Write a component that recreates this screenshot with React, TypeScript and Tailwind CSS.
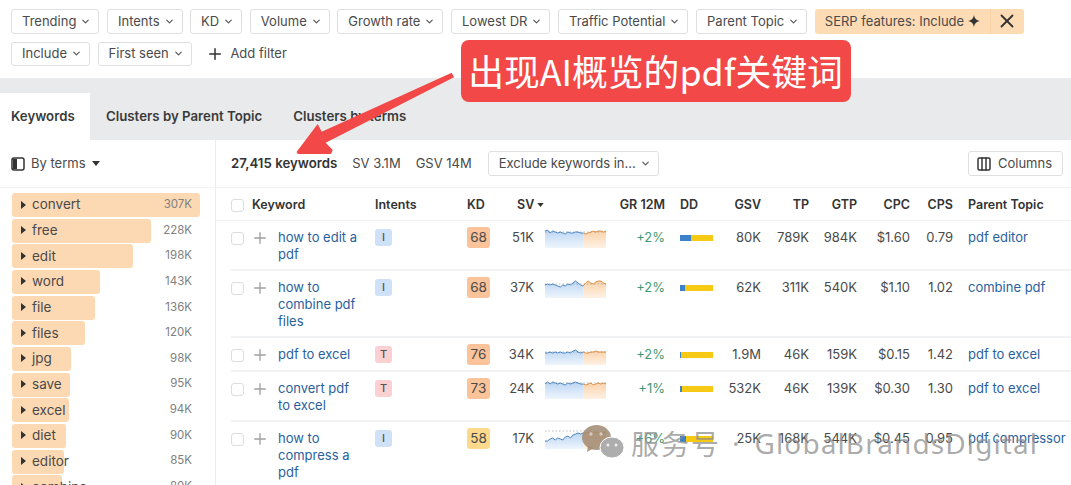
import { ChevronDown, Columns3, Plus, X } from "lucide-react"

const filters = ["Trending", "Intents", "KD", "Volume", "Growth rate", "Lowest DR", "Traffic Potential", "Parent Topic"]

const terms = [
  { label: "convert", count: "307K", width: 188 },
  { label: "free", count: "228K", width: 139 },
  { label: "edit", count: "198K", width: 121 },
  { label: "word", count: "143K", width: 88 },
  { label: "file", count: "136K", width: 83 },
  { label: "files", count: "120K", width: 73 },
  { label: "jpg", count: "98K", width: 59 },
  { label: "save", count: "95K", width: 58 },
  { label: "excel", count: "94K", width: 57 },
  { label: "diet", count: "90K", width: 54 },
  { label: "editor", count: "85K", width: 52 },
  { label: "combine", count: "80K", width: 50 },
]

const rows = [
  {
    keyword: "how to edit a pdf",
    intent: "I",
    kd: 68,
    sv: "51K",
    line: [2, 1, 4, 2, 3, 4, 3, 4, 5, 3, 4, 4, 3, 3, 4, 4, 5, 4, 3, 2, 3, 2, 2, 3, 2],
    dash: 3,
    gr: "+2%",
    blue: 11,
    gsv: "80K",
    tp: "789K",
    gtp: "984K",
    cpc: "$1.60",
    cps: "0.79",
    parent: "pdf editor",
    height: "h-[50px]",
  },
  {
    keyword: "how to combine pdf files",
    intent: "I",
    kd: 68,
    sv: "37K",
    line: [6, 5, 6, 5, 6, 7, 8, 6, 7, 5, 6, 4, 2, 4, 6, 7, 4, 2, 4, 5, 3, 2, 2, 4, 5],
    dash: 5,
    gr: "+2%",
    blue: 5,
    gsv: "62K",
    tp: "311K",
    gtp: "540K",
    cpc: "$1.10",
    cps: "1.02",
    parent: "combine pdf",
    height: "h-[67px]",
  },
  {
    keyword: "pdf to excel",
    intent: "T",
    kd: 76,
    sv: "34K",
    line: [7, 7, 6, 7, 6, 7, 6, 7, 7, 6, 7, 5, 4, 6, 7, 6, 7, 7, 6, 6, 5, 6, 6, 6, 6],
    dash: 6,
    gr: "+2%",
    blue: 1,
    gsv: "1.9M",
    tp: "46K",
    gtp: "159K",
    cpc: "$0.15",
    cps: "1.42",
    parent: "pdf to excel",
    height: "h-[34px]",
  },
  {
    keyword: "convert pdf to excel",
    intent: "T",
    kd: 73,
    sv: "24K",
    line: [4, 2, 4, 2, 3, 4, 3, 4, 5, 3, 4, 3, 2, 3, 4, 4, 5, 4, 3, 5, 4, 3, 4, 3, 4],
    dash: 3,
    gr: "+1%",
    blue: 2,
    gsv: "532K",
    tp: "46K",
    gtp: "139K",
    cpc: "$0.30",
    cps: "1.30",
    parent: "pdf to excel",
    height: "h-[50px]",
  },
  {
    keyword: "how to compress a pdf",
    intent: "I",
    kd: 58,
    sv: "17K",
    line: [11, 11, 9, 8, 10, 8, 9, 10, 7, 6, 8, 5, 4, 3, 4, 3, 3, 2, 4, 3, 2, 3, 4, 2, 3],
    dash: 1,
    gr: "+6%",
    blue: 6,
    gsv: "25K",
    tp: "168K",
    gtp: "544K",
    cpc: "$0.45",
    cps: "0.95",
    parent: "pdf compressor",
    height: "h-[68px]",
  },
]

const columns = "grid grid-cols-[47px_97px_92px_28px_39px_72px_59px_48px_48px_48px_48px_53px_43px_103px]"

function Pill({ label }: { label: string }) {
  return (
    <button
      type="button"
      className="flex h-[24.5px] items-center gap-[4px] rounded-[3px] border border-[#dedfe1] bg-white pr-[7px] pl-[10px] text-[13px] text-[#4a4a4a]"
    >
      {label}
      <ChevronDown className="size-[11px] text-[#555]" strokeWidth={2.5} />
    </button>
  )
}

function Caret({ className }: { className?: string }) {
  return (
    <svg viewBox="0 0 8 5" className={className}>
      <path d="M0 0h8L4 5z" fill="currentColor" />
    </svg>
  )
}

function Sparkline({ id, line, dash }: { id: string; line: number[]; dash: number }) {
  const step = 61 / (line.length - 1)
  const split = 15
  const point = (v: number, i: number) => `${(i * step).toFixed(1)} ${v}`
  const bluePts = line.slice(0, split + 1).map(point)
  const orangePts = line.map(point).slice(split)
  const splitX = split * step
  return (
    <svg viewBox="0 0 61 19" className="h-[19px] w-[61px]">
      <defs>
        <linearGradient id={`${id}b`} x1="0" x2="0" y1="0" y2="1">
          <stop offset="0" stopColor="#bcd6f3" />
          <stop offset="1" stopColor="#eef5fc" />
        </linearGradient>
        <linearGradient id={`${id}o`} x1="0" x2="0" y1="0" y2="1">
          <stop offset="0" stopColor="#fbd3ac" />
          <stop offset="1" stopColor="#fef1e4" />
        </linearGradient>
      </defs>
      <path d={`M${bluePts.join("L")}L${splitX} 19L0 19Z`} fill={`url(#${id}b)`} />
      <path d={`M${orangePts.join("L")}L61 19L${splitX} 19Z`} fill={`url(#${id}o)`} />
      <path d={`M0 ${dash}H61`} stroke="#555" strokeOpacity="0.5" strokeWidth="0.8" strokeDasharray="1.5 2" />
      <path d={`M${bluePts.join("L")}`} fill="none" stroke="#4a86c5" strokeWidth="1" />
      <path d={`M${orangePts.join("L")}`} fill="none" stroke="#d98d45" strokeWidth="1" />
    </svg>
  )
}

function Checkbox() {
  return <span className="size-[13px] shrink-0 rounded-[3px] border border-[#dcdde0] bg-white" />
}

export default function App() {
  return (
    <div className="relative h-[485px] w-[1071px] overflow-hidden bg-white font-['Inter',sans-serif] text-[#3d3d3d]">
      <div className="flex h-[78px] flex-wrap content-start gap-x-[7.6px] gap-y-2 pt-[9px] pl-[11px]">
        {filters.map((label) => (
          <Pill key={label} label={label} />
        ))}
        <div className="flex h-[24.5px] w-[209px] items-center rounded-[3px] bg-[#fddcb5] pl-[10px] text-[13px] whitespace-nowrap text-[#4a4a4a]">
          <span>SERP features: Include</span>
          <svg viewBox="0 0 16 16" className="ml-[3px] size-[14px] shrink-0 text-[#333]">
            <path d="M8 1c.7 4 2.600 6.200 7 7-4.400.8-6.300 3-7 7-.7-4-2.600-6.200-7-7 4.400-.8 6.300-3 7-7z" fill="currentColor" />
          </svg>
          <span className="ml-auto flex h-full w-[34px] shrink-0 items-center justify-center border-l border-[#fbd2a3]">
            <X className="size-[22px] text-[#333]" strokeWidth={2} />
          </span>
        </div>
        <Pill label="Include" />
        <Pill label="First seen" />
        <button type="button" className="ml-[7px] flex h-[24.5px] items-center gap-[6px] text-[13px] text-[#4a4a4a]">
          <Plus className="size-[18px] text-[#333]" strokeWidth={2} />
          Add filter
        </button>
      </div>

      <div className="flex h-[62px] items-end bg-[#e9eaeb] text-[13.25px] font-semibold text-[#3a3a3a]">
        <div className="flex h-[47px] w-[90px] items-center bg-white pl-[11px]">Keywords</div>
        <div className="flex h-[47px] items-center pl-[16px]">Clusters by Parent Topic</div>
        <div className="flex h-[47px] items-center pl-[31px]">Clusters by terms</div>
      </div>

      <div className="flex">
        <aside className="w-[216px] shrink-0 border-r border-[#eceded]">
          <div className="flex h-[48px] items-center border-b border-[#f0f1f2] pl-[11px] text-[13px] text-[#4a4a4a]">
            <svg viewBox="0 0 14 14" className="size-[14px] text-[#333]">
              <rect x="1" y="1" width="12" height="12" rx="2" fill="none" stroke="currentColor" strokeWidth="1.5" />
              <path d="M2 2h4v10H2z" fill="currentColor" />
            </svg>
            <span className="ml-[6px]">By terms</span>
            <Caret className="ml-[6px] h-[5px] w-[8px] text-[#333]" />
          </div>
          <div className="pt-[5px] pl-[12px]">
            {terms.map((term) => (
              <div key={term.label} className="relative h-[25.67px] w-[188px]">
                <div className="h-[24px] rounded-[3px] bg-[#fdd9b3]" style={{ width: term.width }} />
                <div className="absolute inset-x-0 top-0 flex h-[23px] items-center pr-[8px] pl-[9px]">
                  <svg viewBox="0 0 5 8" className="h-[8px] w-[5px] text-[#333]">
                    <path d="M0 0l5 4-5 4z" fill="currentColor" />
                  </svg>
                  <span className="ml-[6px] text-[13.5px] text-[#4a4a4a]">{term.label}</span>
                  <span className="ml-auto text-[11.5px] text-[#808080]">{term.count}</span>
                </div>
              </div>
            ))}
          </div>
        </aside>

        <main className="min-w-0 flex-1">
          <div className="flex h-[48px] items-center border-b border-[#f0f1f2] pr-[8px] pl-[15px] text-[13px] text-[#4a4a4a]">
            <span className="text-[13.25px] font-semibold text-[#333]">27,415 keywords</span>
            <span className="ml-[15px]">SV 3.1M</span>
            <span className="ml-[15px]">GSV 14M</span>
            <button
              type="button"
              className="ml-[16px] flex h-[25px] items-center gap-[4px] rounded-[3px] border border-[#dedfe1] pr-[7px] pl-[10px] text-[13px]"
            >
              Exclude keywords in...
              <ChevronDown className="size-[11px] text-[#555]" strokeWidth={2.5} />
            </button>
            <button
              type="button"
              className="ml-auto flex h-[25px] items-center gap-[6px] rounded-[3px] border border-[#dedfe1] pr-[10px] pl-[7px] text-[13px]"
            >
              <Columns3 className="size-[16px] text-[#333]" strokeWidth={2.2} />
              Columns
            </button>
          </div>

          <div className={`${columns} h-[33px] items-center border-b border-[#f0f1f2] pt-[2px] pl-[15px] text-[12.5px] font-semibold text-[#333]`}>
            <div className="flex items-center">
              <Checkbox />
              <span className="ml-[8px]">Keyword</span>
            </div>
            <span />
            <span>Intents</span>
            <span>KD</span>
            <div className="col-span-2 flex items-center pl-[22px]">
              SV
              <Caret className="ml-[3px] h-[4px] w-[7px] text-[#333]" />
            </div>
            <span className="text-right">GR 12M</span>
            <span className="pl-[15px]">DD</span>
            <span className="text-right">GSV</span>
            <span className="text-right">TP</span>
            <span className="text-right">GTP</span>
            <span className="text-right">CPC</span>
            <span className="text-right">CPS</span>
            <span className="pl-[15px] whitespace-nowrap">Parent Topic</span>
          </div>

          <div className="pl-[15px]">
            {rows.map((row, i) => (
              <div
                key={row.keyword}
                className={`${columns} ${row.height} items-start border-b-2 border-[#f1f2f3] pt-[8px] text-[13px] leading-[17px] text-[#4a4a4a]`}
              >
                <div className="flex items-center pt-[2px]">
                  <Checkbox />
                  <Plus className="-my-[2px] ml-[7px] size-[18px] text-[#a0a0a0]" strokeWidth={1.8} />
                </div>
                <a className="pr-[14px] text-[#2a5f9e]">{row.keyword}</a>
                <div>
                  <span
                    className={`flex size-[17px] items-center justify-center rounded-[3px] text-[11px] font-medium text-[#555] ${
                      row.intent === "I" ? "bg-[#cfe1f6]" : "bg-[#fbd0d2]"
                    }`}
                  >
                    {row.intent}
                  </span>
                </div>
                <div className="-mt-[2px]">
                  <span
                    className={`flex h-[21px] w-[23px] items-center justify-center rounded-[3px] text-[13.5px] ${
                      row.kd === 58 ? "bg-[#fdd98c]" : "bg-[#fac39a]"
                    }`}
                  >
                    {row.kd}
                  </span>
                </div>
                <span className="text-right">{row.sv}</span>
                <div className="pl-[11px]">
                  <Sparkline id={`spark${i}`} line={row.line} dash={row.dash} />
                </div>
                <span className="text-right text-[#3f9a72]">{row.gr}</span>
                <div className="flex pt-[6px] pl-[15px]">
                  <span className="h-[6px] bg-[#3b82c9]" style={{ width: row.blue }} />
                  <span className="h-[6px] flex-1 bg-[#f6c915]" />
                </div>
                <span className="text-right">{row.gsv}</span>
                <span className="text-right">{row.tp}</span>
                <span className="text-right">{row.gtp}</span>
                <span className="text-right">{row.cpc}</span>
                <span className="text-right">{row.cps}</span>
                <a className="pl-[15px] whitespace-nowrap text-[#2a5f9e]">{row.parent}</a>
              </div>
            ))}
          </div>
        </main>
      </div>

      {/* annotation pasted over the screenshot */}
      <svg viewBox="0 0 1071 485" className="pointer-events-none absolute inset-0 h-[485px] w-[1071px]">
        <polygon
          points="451.7,72.700 454,77.300 325.700,142.700 332.700,150 331,154 298,154 296.500,152 317.700,124 321.700,131.700"
          fill="#f24848"
        />
      </svg>
      <div className="absolute top-[40px] left-[461px] flex h-[62px] w-[390px] items-center justify-center rounded-[8px] bg-[#f24848] pr-[1px] font-['Noto_Sans_CJK_SC',sans-serif] text-[35.8px] whitespace-nowrap text-white">
        出现AI概览的pdf关键词
      </div>

      {/* wechat watermark */}
      <svg viewBox="0 0 42 34" className="pointer-events-none absolute top-[425px] left-[582px] h-[34px] w-[42px]">
        <ellipse cx="14.500" cy="12.500" rx="14.500" ry="12.500" fill="#a08a72" fillOpacity="0.85" />
        <path d="M6 21l-1 6 7-4z" fill="#a08a72" fillOpacity="0.85" />
        <ellipse cx="30" cy="22.500" rx="12" ry="10.500" fill="#adadad" stroke="#fff" strokeWidth="1" />
        <circle cx="9" cy="9" r="1.700" fill="#fff" fillOpacity="0.5" />
        <circle cx="19" cy="9" r="1.700" fill="#fff" fillOpacity="0.5" />
        <circle cx="26" cy="20" r="1.500" fill="#fff" fillOpacity="0.8" />
        <circle cx="34" cy="20" r="1.500" fill="#fff" fillOpacity="0.8" />
      </svg>
      <div className="pointer-events-none absolute top-[423px] left-[631px] flex items-center font-['Noto_Sans',sans-serif] text-[28px] leading-[40px] whitespace-nowrap text-[#8f8f8f]/75">
        <span className="font-['Noto_Sans_CJK_SC',sans-serif] tracking-[2px]">服务号</span>
        <span className="ml-[11px]">·</span>
        <span className="ml-[15px] tracking-[1.1px]">GlobalBrandsDigital</span>
      </div>
    </div>
  )
}
